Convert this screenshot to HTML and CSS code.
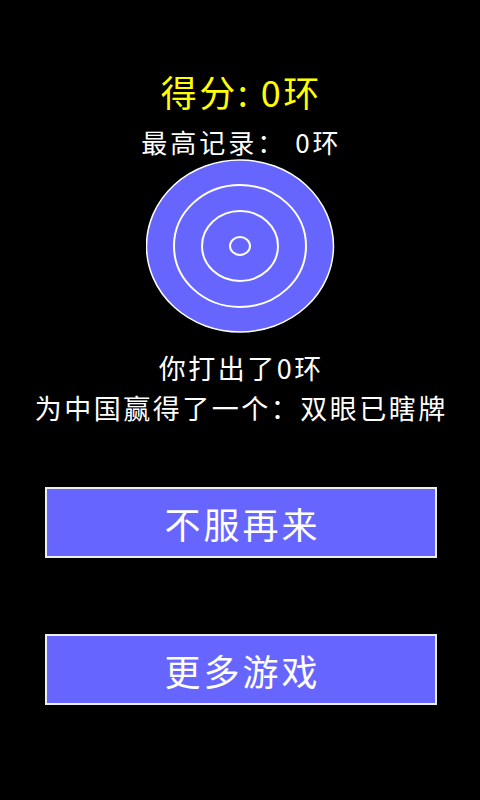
FILE: index.html
```html
<!DOCTYPE html>
<html lang="zh-CN">
<head>
<meta charset="utf-8">
<link rel="stylesheet" href="styles.css">
</head>
<body>
<main class="screen">
  <h1 class="score">得分: 0环</h1>
  <p class="record">最高记录：&nbsp;0环</p>
  <svg class="target" width="190" height="176" viewBox="0 0 190 176">
    <ellipse cx="94" cy="87" rx="93.5" ry="86" fill="#6666ff" stroke="#ffffff" stroke-width="1.5"/>
    <ellipse cx="94" cy="87" rx="66" ry="61" fill="none" stroke="#ffffff" stroke-width="2"/>
    <ellipse cx="94" cy="87" rx="38" ry="35" fill="none" stroke="#ffffff" stroke-width="2"/>
    <ellipse cx="94" cy="87" rx="10" ry="9" fill="none" stroke="#ffffff" stroke-width="2"/>
  </svg>
  <div class="result">
    <p class="line">你打出了0环</p>
    <p class="line">为中国赢得了一个：双眼已瞎牌</p>
  </div>
  <div class="actions">
    <button class="btn">不服再来</button>
    <button class="btn">更多游戏</button>
  </div>
</main>
</body>
</html>
```

FILE: styles.css
```css
html, body {
  margin: 0;
  padding: 0;
  background: #000;
}
body {
  width: 480px;
  height: 800px;
  overflow: hidden;
  font-family: "Noto Sans CJK SC", "Noto Sans", sans-serif;
  color: #fff;
}
.screen {
  display: flex;
  flex-direction: column;
  align-items: center;
  padding-top: 71px;
}
.score {
  margin: 0;
  font-size: 36px;
  font-weight: normal;
  line-height: 40px;
  color: #ffff00;
  letter-spacing: 2.5px;
  padding-left: 2.5px;
}
.record {
  margin: 16px 0 0;
  font-size: 26px;
  line-height: 30px;
  letter-spacing: 3px;
  padding-left: 3px;
}
.target {
  display: block;
  margin-top: 2px;
  margin-left: 2px;
}
.result {
  margin-top: 12.5px;
  display: flex;
  flex-direction: column;
  align-items: center;
}
.line {
  margin: 0;
  font-size: 27px;
  line-height: 40px;
  letter-spacing: 2.5px;
  padding-left: 2.5px;
  text-align: center;
}
.actions {
  margin-top: 59.5px;
  display: flex;
  flex-direction: column;
  gap: 76px;
}
.btn {
  width: 392px;
  height: 71px;
  margin: 0;
  padding: 0 0 0 3px;
  background: #6666ff;
  border: 2px solid #eeeeee;
  color: #fff;
  font-family: "Noto Sans CJK SC", "Noto Sans", sans-serif;
  font-size: 36px;
  letter-spacing: 3px;
  margin-left: 2px;
}
```
